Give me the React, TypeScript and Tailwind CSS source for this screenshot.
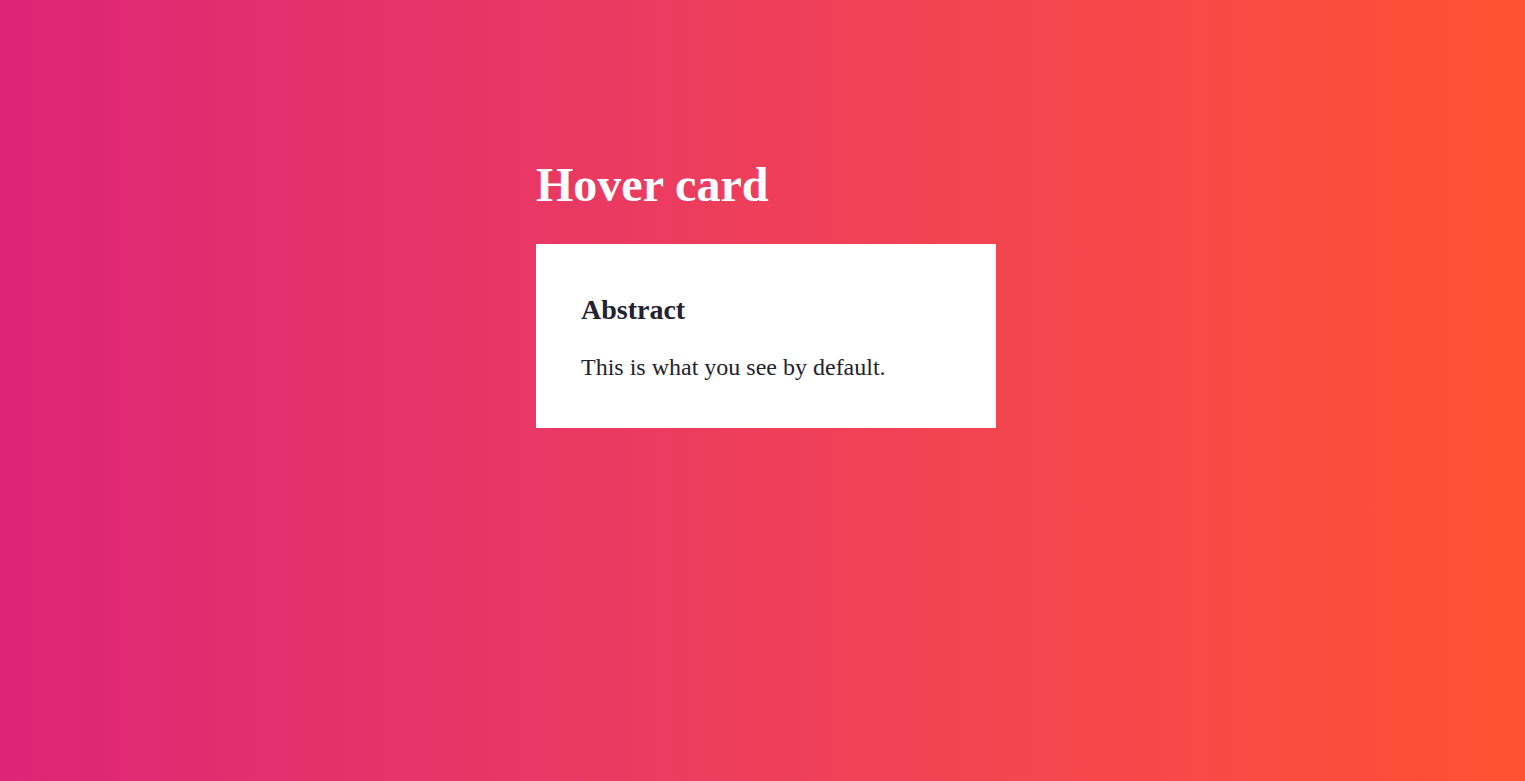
export default function App() {
  return (
    <div
      className="min-h-screen w-full bg-gradient-to-r from-[#dd2476] to-[#ff512f] pl-[536px] pt-[157px]"
      style={{ fontFamily: '"Liberation Serif", "Times New Roman", serif' }}
    >
      <h1 className="text-[48px] font-bold leading-[1.15] text-white">Hover card</h1>
      <div className="mt-[32px] w-[460px] h-[184px] bg-white px-[45px] pt-[50px] text-[#222230]">
        <h2 className="text-[28px] font-bold leading-[1.15]">Abstract</h2>
        <p className="mt-[28px] text-[24px] leading-[1.15]">This is what you see by default.</p>
      </div>
    </div>
  );
}
